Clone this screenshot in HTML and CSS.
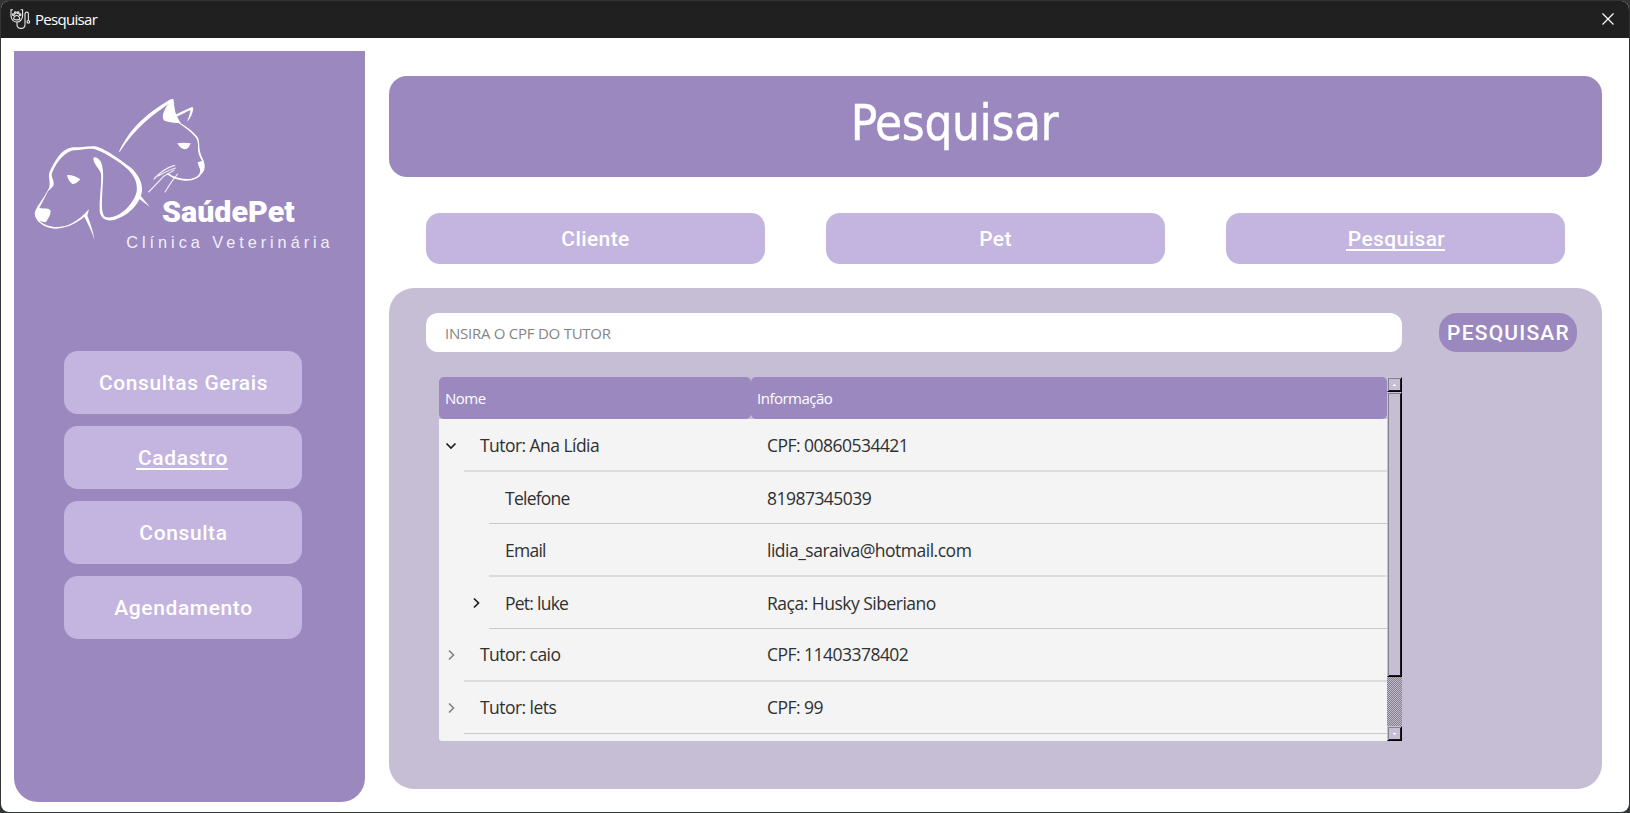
FILE: index.html
```html
<!DOCTYPE html>
<html lang="pt-BR">
<head>
<meta charset="utf-8">
<title>Pesquisar</title>
<link rel="stylesheet" href="styles.css">
</head>
<body>
<div class="window">
  <header class="titlebar">
    <svg class="app-icon" viewBox="0 0 20 20" fill="none" stroke="#e8e8e8" stroke-width="1.100">
      <path d="M3 .8H1V6.500C1 10.500 3.500 13 6.700 13S12.600 10.500 12.600 6.500V.8H10.600M7 13V15.500C7 20.700 15 20.700 15 15.500V5C15 2.500 18.400 2.500 18.400 5V11.500"/>
      <circle cx="18.300" cy="12.800" r="1.300"/>
      <path d="M3.700 9.500C3.700 7.800 5.500 6.500 6.700 6.500S9.700 7.800 9.700 9.500 3.700 11.500 3.700 9.500Z"/>
      <circle cx="3.400" cy="5.800" r=".9"/><circle cx="5.400" cy="3.800" r=".9"/><circle cx="8.100" cy="3.800" r=".9"/><circle cx="10.100" cy="5.800" r=".9"/>
    </svg>
    <span class="caption">Pesquisar</span>
    <svg class="close" viewBox="0 0 12 12" stroke="#fff" stroke-width="1.200"><path d="M.5 .5L11.500 11.500M11.500 .5L.5 11.500"/></svg>
  </header>
  <div class="content">
    <aside class="sidebar">
      <svg class="logo" viewBox="0 0 960 510" fill="none" stroke="#fff" stroke-linecap="round" stroke-linejoin="round">
        <g fill="#fff" stroke="none">
          <path d="M297 185C325 125 370 75 452 28L460 27L463 42L455 36C395 75 345 115 299 186Z"/>
          <path d="M458 27C464 48 464 62 469 74C472 82 478 92 482 99C465 99 446 97 433 92C424 82 430 65 440 49Z"/>
          <path d="M464 75L517 50L520 56C517 72 512 84 501 96C506 82 510 73 511 60L470 80Z"/>
          <path d="M474 95C495 107 516 120 530 138C539 146 537 165 539 179C541 195 549 204 552 216C557 232 553 246 543 253C540 262 528 266 515 271C490 275 462 269 440 252L444 250C466 264 490 270 514 266C526 262 538 257 539 248C544 238 536 234 533 217L546 213C538 201 533 186 534 172C535 157 532 148 526 141C512 124 494 111 474 98Z"/>
          <path d="M472 160Q492 156 512 160Q506 178 493 178Q481 176 472 160Z"/>
          <path d="M88 248C104 215 125 172 162 172C184 173 206 167 225 169C255 174 306 214 331 232C355 252 368 279 366 301C364 335 330 377 282 390C258 395 241 384 239 363C238 320 246 280 243 253C241 237 220 225 220 205C223 197 235 203 243 216C254 245 248 276 247 308C245 344 244 372 256 381C291 390 337 350 350 306C354 276 341 256 325 239C300 218 256 187 225 178C201 173 184 182 160 181C134 186 110 215 96 249C92 258 102 270 101 281C101 293 87 297 83 306L58 354C73 357 86 353 92 362C92 377 83 386 78 397C67 396 59 393 55 388C75 412 107 414 131 409C157 403 179 385 194 371L207 357L202 377C211 398 219 424 224 450C215 424 204 401 193 380C166 403 137 415 104 416C70 413 46 393 44 372C46 351 69 330 87 294C93 277 84 263 88 248Z"/>
          <path d="M141 255Q161 254 181 268Q169 283 157 282Q144 272 141 255Z"/>
          <path d="M362 317L389 350L354 324Z"/>
        </g>
        <path stroke-width="3.500" opacity=".85" d="M464 226C438 233 419 248 402 267M467 234C440 241 423 255 408 260M386 306L431 259L462 241M435 306L455 275L473 252"/>
        <text class="brand" x="426" y="395" textLength="398" lengthAdjust="spacingAndGlyphs">SaúdePet</text>
        <text class="tagline" x="319" y="474" textLength="610">Clínica Veterinária</text>
      </svg>
      <nav class="menu">
        <a class="menu-item">Consultas Gerais</a>
        <a class="menu-item"><span class="active">Cadastro</span></a>
        <a class="menu-item">Consulta</a>
        <a class="menu-item">Agendamento</a>
      </nav>
    </aside>
    <main class="main">
      <h1 class="banner">Pesquisar</h1>
      <nav class="tabs">
        <a class="tab">Cliente</a>
        <a class="tab">Pet</a>
        <a class="tab"><span class="active">Pesquisar</span></a>
      </nav>
      <section class="panel">
        <div class="search">
          <div class="field">INSIRA O CPF DO TUTOR</div>
          <div class="submit">PESQUISAR</div>
        </div>
        <div class="tree">
          <div class="grid">
            <div class="head"><div class="th name">Nome</div><div class="th info">Informação</div></div>
            <div class="rows">
              <div class="row soft"><svg class="arrow down" viewBox="0 0 12 12"><path d="M1.500 3.500L6 8L10.500 3.500"/></svg><div class="cells"><span class="label">Tutor: Ana Lídia</span><span class="value num">CPF: 00860534421</span></div></div>
              <div class="row child"><span class="arrow"></span><div class="cells"><span class="label">Telefone</span><span class="value num">81987345039</span></div></div>
              <div class="row child soft"><span class="arrow"></span><div class="cells"><span class="label">Email</span><span class="value">lidia_saraiva@hotmail.com</span></div></div>
              <div class="row child"><svg class="arrow" viewBox="0 0 12 12"><path d="M4 1.500L8.500 6L4 10.500"/></svg><div class="cells"><span class="label">Pet: luke</span><span class="value">Raça: Husky Siberiano</span></div></div>
              <div class="row soft"><svg class="arrow dim" viewBox="0 0 12 12"><path d="M4 1.500L8.500 6L4 10.500"/></svg><div class="cells"><span class="label">Tutor: caio</span><span class="value num">CPF: 11403378402</span></div></div>
              <div class="row"><svg class="arrow dim" viewBox="0 0 12 12"><path d="M4 1.500L8.500 6L4 10.500"/></svg><div class="cells"><span class="label">Tutor: lets</span><span class="value num">CPF: 99</span></div></div>
            </div>
          </div>
          <div class="scrollbar">
            <div class="bevel step"><svg viewBox="0 0 3 2"><path d="M0 2V1H1V0H2V1H3V2Z"/></svg></div>
            <div class="bevel thumb"></div>
            <div class="track"></div>
            <div class="bevel step"><svg viewBox="0 0 3 2"><path d="M0 0H3V1H2V2H1V1H0Z"/></svg></div>
          </div>
        </div>
      </section>
    </main>
  </div>
</div>
</body>
</html>
```
FILE: styles.css
```css
* { box-sizing: border-box; }
body {
  margin: 0;
  padding: 1px;
  height: 813px;
  background: #333436;
  font-family: "Open Sans", "Noto Sans", sans-serif;
  overflow: hidden;
}
.window {
  height: 811px;
  display: flex;
  flex-direction: column;
  background: #fff;
  border-radius: 8px;
  overflow: hidden;
}
.titlebar {
  height: 37px;
  flex: none;
  display: flex;
  align-items: center;
  padding: 0 15px 2px 9px;
  background: #212020;
  color: #fff;
}
.app-icon { width: 20px; height: 20px; }
.caption { margin-left: 5px; font-size: 15px; letter-spacing: -0.7px; }
.close { width: 12px; height: 12px; margin-left: auto; }
.content { flex: 1; display: flex; gap: 24px; padding: 13px 27px 0 13px; }

.sidebar {
  width: 351px;
  height: 750.500px;
  background: #9b88bf;
  border-radius: 0 0 24px 24px;
  padding: 39px 0 0 6px;
}
.logo { display: block; width: 320px; height: 170px; overflow: visible; }
.brand { font: 900 87px Roboto, sans-serif; fill: #fff; stroke: none; }
.tagline { font: 49px "Liberation Sans", sans-serif; fill: #f3effa; stroke: none; }
.menu { display: flex; flex-direction: column; gap: 12px; margin: 91px 0 0 44px; width: 238px; }
.menu-item, .tab {
  display: flex;
  align-items: center;
  justify-content: center;
  background: #c4b4e0;
  color: #fff;
  font: 500 21px Roboto, sans-serif;
}
.menu-item { height: 63px; border-radius: 14px; letter-spacing: 0.6px; padding-left: 1px; }
.active { border-bottom: 2px solid #fff; line-height: 19px; padding: 3px 0 0 2px; }
.menu-item .active { margin-right: 3px; }

.main { flex: 1; display: flex; flex-direction: column; padding-top: 25px; }
.banner {
  margin: 0;
  height: 101px;
  border-radius: 18px;
  background: #9b88bf;
  color: #fff;
  font: 49px/96px "DejaVu Sans Condensed", "DejaVu Sans", sans-serif;
  font-stretch: condensed;
  letter-spacing: -0.4px;
  text-align: center;
  padding-right: 82px;
  -webkit-text-stroke: 0.4px #fff;
}
.tabs { display: grid; grid-template-columns: repeat(3, 1fr); gap: 61px; padding: 0 37px; margin-top: 36px; }
.tab { height: 51px; border-radius: 14px; letter-spacing: 0.4px; }
.tab .active { padding-top: 4px; }

.panel {
  margin-top: 24px;
  height: 501px;
  background: #c6bed4;
  border-radius: 25px;
  padding: 25px 25px 0 37px;
}
.search { display: flex; justify-content: space-between; }
.field {
  width: 976px;
  height: 39px;
  border-radius: 12px;
  background: #fff;
  padding-left: 19px;
  color: #858585;
  font-size: 15px;
  line-height: 40px;
  letter-spacing: -0.25px;
}
.submit {
  width: 138px;
  height: 39px;
  border-radius: 18px;
  background: #9b88bf;
  color: #fff;
  font: 500 21px/40px Roboto, sans-serif;
  letter-spacing: 1.200px;
  text-align: center;
  padding-left: 1px;
}
.tree { display: flex; width: 963px; height: 364px; margin: 25px 0 0 13px; }
.grid { width: 948px; overflow: hidden; border-bottom-left-radius: 3px; }
.head { display: flex; height: 42px; }
.th {
  background: #9b88bf;
  border-radius: 5px;
  color: #fff;
  padding-left: 6px;
  font-size: 15px;
  line-height: 43px;
  letter-spacing: -0.5px;
}
.name { width: 312px; }
.info { flex: 1; }
.rows { background: #f4f4f4; height: 322px; padding-top: 0.700px; }
.row { display: flex; height: 52.400px; align-items: center; padding-left: 6px; color: #303030; font-size: 17.500px; }
.child { padding-left: 31px; }
.arrow { width: 12px; height: 12px; flex: none; fill: none; stroke: #1c1c1c; stroke-width: 1.700; margin-right: 7px; }
.dim { stroke: #858585; }
.cells {
  flex: 1;
  display: grid;
  grid-template-columns: 287px 1fr;
  height: 100%;
  align-items: center;
  padding: 0 0 0 16px;
  border-bottom: 1px solid #c8c8c8;
}
.soft .cells { border-bottom: 2px solid #dcdcdc; }
.child .cells { grid-template-columns: 262px 1fr; }
.label { letter-spacing: -0.55px; }
.child .label { letter-spacing: -0.75px; }
.value { letter-spacing: -0.5px; }
.num { letter-spacing: -0.53px; }

.scrollbar { width: 15px; display: flex; flex-direction: column; }
.bevel {
  border: 1px solid #c9c1d6;
  border-right: 1px solid #000;
  border-bottom: 1px solid #000;
  box-shadow: inset 1px 1px #85808d, inset -1px -1px #1d1b20;
  display: flex;
  align-items: center;
  justify-content: center;
}
.step { height: 15px; flex: none; }
.step svg { width: 3px; height: 2px; fill: #fff; }
.thumb { height: 285px; flex: none; }
.track { flex: 1; background: repeating-conic-gradient(#858189 0 25%, #c0b8cc 0 50%) 0 0 / 2px 2px; }
```
